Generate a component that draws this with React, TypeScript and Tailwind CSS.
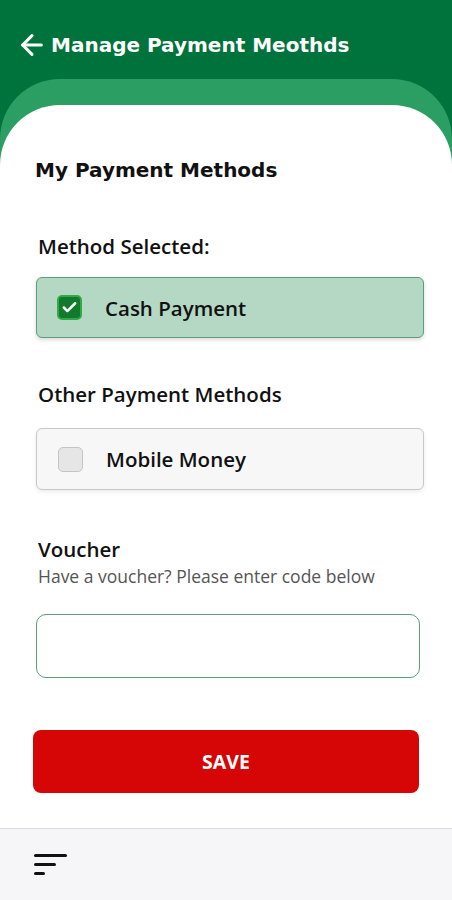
import { ArrowLeft, Check } from 'lucide-react';

const body = { fontFamily: '"Open Sans", "Noto Sans", sans-serif' };
const display = { fontFamily: '"DejaVu Sans", Verdana, sans-serif' };

function MethodCard({ label, selected }: { label: string; selected?: boolean }) {
  return (
    <div
      className={
        selected
          ? 'w-[388px] h-[61px] rounded-md border border-[#5f9c7c] bg-[#b4d8c4] shadow-[0_2px_4px_rgba(0,0,0,0.15)] flex items-center pl-[20px]'
          : 'w-[388px] h-[62px] rounded-md border border-[#c8c8c8] bg-[#f7f7f7] shadow-[0_2px_4px_rgba(0,0,0,0.08)] flex items-center pl-[21px]'
      }
    >
      {selected ? (
        <div className="w-[25px] h-[25px] rounded-[5px] bg-[#127a2c] border-2 border-[#33a844] flex items-center justify-center">
          <Check size={17} strokeWidth={3.5} className="text-white" />
        </div>
      ) : (
        <div className="w-[25px] h-[25px] rounded-[5px] bg-[#e6e6e6] border border-[#c4c4c4]" />
      )}
      <span className="ml-[23px] text-[20.5px] leading-[24px] font-semibold text-[#111]" style={body}>
        {label}
      </span>
    </div>
  );
}

export default function App() {
  return (
    <div className="w-[452px] h-[900px] bg-[#00733d] flex flex-col overflow-hidden">
      {/* header */}
      <div className="h-[79px] shrink-0 flex items-center pl-[16px] pt-[10px] text-white">
        <ArrowLeft size={32} strokeWidth={2.3} />
        <span className="ml-[3px] text-[20px] font-bold" style={display}>
          Manage Payment Meothds
        </span>
      </div>

      {/* green band + white sheet */}
      <div className="flex-1 flex flex-col bg-[#2b9e63] rounded-t-[60px] pt-[26px]">
        <div className="flex-1 flex flex-col bg-white rounded-t-[60px]">
          <div className="flex-1 flex flex-col pl-[36px] pt-[53px]">
            <h1 className="text-[20px] leading-[24px] font-bold text-[#111] -ml-[1px]" style={display}>
              My Payment Methods
            </h1>

            <p className="mt-[52px] ml-[2px] text-[20.5px] leading-[24px] font-semibold text-[#111]" style={body}>
              Method Selected:
            </p>
            <div className="mt-[19px]">
              <MethodCard label="Cash Payment" selected />
            </div>

            <p className="mt-[44px] ml-[2px] text-[20.5px] leading-[24px] font-semibold text-[#111]" style={body}>
              Other Payment Methods
            </p>
            <div className="mt-[22px]">
              <MethodCard label="Mobile Money" />
            </div>

            <p className="mt-[47px] ml-[2px] text-[20.5px] leading-[24px] font-semibold text-[#111]" style={body}>
              Voucher
            </p>
            <p className="mt-[5px] ml-[2px] text-[17.5px] leading-[20px] text-[#555]" style={body}>
              Have a voucher? Please enter code below
            </p>

            <input
              className="mt-[28px] w-[384px] h-[64px] rounded-[10px] border border-[#5f9c7c] bg-white outline-none px-4"
              style={body}
            />

            <button
              className="mt-[52px] -ml-[3px] w-[386px] h-[63px] rounded-lg bg-[#d60606] text-white text-[19.5px] font-bold"
              style={body}
            >
              SAVE
            </button>
          </div>

          {/* bottom bar */}
          <div className="h-[72px] shrink-0 bg-[#f6f6f8] border-t border-[#dcdcdc] flex items-center pl-[34px]">
            <div className="flex flex-col gap-[6px]">
              <div className="w-[33px] h-[3px] bg-[#111] rounded-sm" />
              <div className="w-[22px] h-[3px] bg-[#111] rounded-sm" />
              <div className="w-[11px] h-[3px] bg-[#111] rounded-sm" />
            </div>
          </div>
        </div>
      </div>
    </div>
  );
}
